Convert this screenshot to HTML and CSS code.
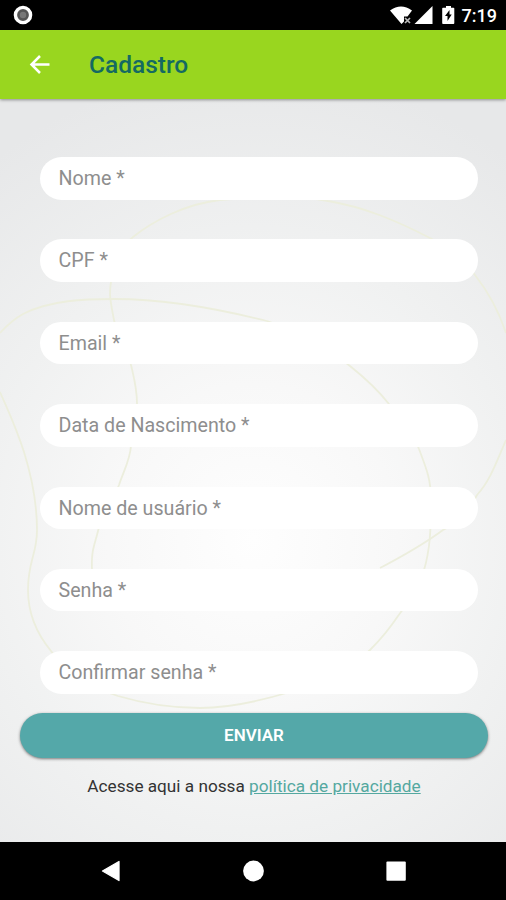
FILE: index.html
```html
<!DOCTYPE html>
<html lang="pt-BR">
<head>
<meta charset="utf-8">
<title>Cadastro</title>
<link rel="stylesheet" href="styles.css">
</head>
<body>
<div class="status-bar">
  <svg class="status-dot" width="20" height="20" viewBox="0 0 20 20"><circle cx="10" cy="10" r="7.6" fill="#555" stroke="#fff" stroke-width="3.4"/><circle cx="10" cy="10" r="3.2" fill="#777"/></svg>
  <div class="status-right">
    <svg width="66" height="20" viewBox="0 0 66 20">
      <path d="M1 5.500Q12 -2.500 23 5.500L18.500 11.500H15V16.500L12.500 19Z" fill="#fff"/>
      <path d="M16 13l5 5M21 13l-5 5" stroke="#bbb" stroke-width="1.700"/>
      <path d="M43.500 1V19H25.500Z" fill="#fff"/>
      <path d="M54 2.800h3V1h5v1.800h2.500q.8 0 .8.8V18q0 1-.8 1H54q-.8 0-.8-1V3.600q0-.8.800-.8Z" fill="#fff"/>
      <path d="M60.500 5l-4.500 6h2.500v5l4.200-6.500h-2.200Z" fill="#000"/>
    </svg>
    <span class="clock">7:19</span>
  </div>
</div>
<header class="app-bar">
  <svg class="back" width="22" height="20" viewBox="0 0 22 20"><path d="M20.500 9.500H2.500M11 1L2.500 9.500L11 18" fill="none" stroke="#fff" stroke-width="2.500"/></svg>
  <h1 class="title">Cadastro</h1>
</header>
<main class="content">
  <svg class="backdrop" width="506" height="743" viewBox="0 99 506 743" fill="none" stroke="#eceedd" stroke-width="1.800">
    <path d="M0 333Q12 320 23 314C50 300 85 299 115 299C165 299 215 308 267 321C305 333 330 350 350 366C365 378 378 390 389 404C405 422 414 434 419 449C427 470 431 480 431 500C431 530 430 550 424 570C418 588 410 601 398 616Q386 634 370 650C350 670 325 682 290 692C260 701 230 708 200 708C170 708 145 704 118 696C90 687 67 673 51 651C37 634 28 615 28 590C28 560 37 555 37 530C37 503 33 481 24 452C16 427 10 415 0 392"/>
    <path d="M92 569C91 550 95 544 98 531C103 512 113 500 119 485C124 470 130 460 131 446C135 432 138 420 137 404C137 388 134 378 131 365C125 346 117 337 114 320C110 300 109 293 111 282C113 264 120 248 133 237C153 221 185 204 220 200C260 196 302 196 328 201C364 207 395 220 430 238C451 249 465 261 475 275C490 294 499 312 506 333"/>
    <path d="M506 440C496 463 490 481 477 495C469 511 460 522 443 530C424 544 403 556 380 568"/>
  </svg>
  <form class="form">
    <label class="field">Nome *</label>
    <label class="field">CPF *</label>
    <label class="field">Email *</label>
    <label class="field">Data de Nascimento *</label>
    <label class="field">Nome de usuário *</label>
    <label class="field">Senha *</label>
    <label class="field">Confirmar senha *</label>
  </form>
  <button class="submit" type="button">ENVIAR</button>
  <p class="privacy">Acesse aqui a nossa <a class="link" href="#">política de privacidade</a></p>
</main>
<nav class="nav-bar">
  <svg width="20" height="22" viewBox="0 0 20 22"><path d="M2.500 11L19 1.500V20.500Z" fill="#fff" stroke="#fff" stroke-width="1.300" stroke-linejoin="round"/></svg>
  <svg width="22" height="22" viewBox="0 0 22 22"><circle cx="11.500" cy="11" r="10.400" fill="#fff"/></svg>
  <svg width="20" height="20" viewBox="0 0 20 20"><rect x=".4" y=".4" width="19.400" height="19.400" rx="1" fill="#fff"/></svg>
</nav>
</body>
</html>
```
FILE: styles.css
```css
* { box-sizing: border-box; }

body {
  margin: 0;
  width: 506px;
  height: 900px;
  overflow: hidden;
  display: flex;
  flex-direction: column;
  font-family: Roboto, "Liberation Sans", sans-serif;
  background: #000;
}

.status-bar {
  height: 30px;
  flex: none;
  display: flex;
  justify-content: space-between;
  align-items: center;
  padding: 0 9px 0 13px;
  background: #000;
}

.status-right {
  display: flex;
  align-items: center;
  gap: 7px;
}

.clock {
  color: #fff;
  font-size: 18px;
  font-weight: 500;
  line-height: 20px;
  padding-top: 2px;
}

.app-bar {
  height: 69px;
  flex: none;
  display: flex;
  align-items: center;
  gap: 38px;
  padding-left: 29px;
  background: #99d61f;
  box-shadow: 0 1px 3px rgba(0, 0, 0, 0.4);
  z-index: 1;
}

.title {
  margin: 0;
  color: #146a62;
  font-size: 24.500px;
  font-weight: 500;
  line-height: 30px;
}

.content {
  position: relative;
  height: 743px;
  flex: none;
  padding-top: 58px;
  background: radial-gradient(ellipse 440px 470px at 253px 440px, #fefefe 0%, #f8f8f8 33%, #f0f1f1 62%, #e7e8e9 100%);
}

.backdrop {
  position: absolute;
  inset: 0;
}

.form {
  position: relative;
  display: flex;
  flex-direction: column;
  gap: 39.900px;
  padding: 0 28px 0 40px;
}

.field {
  height: 42.500px;
  border-radius: 22px;
  padding-left: 18.500px;
  background: #fff;
  color: #8e8e8e;
  font-size: 19.650px;
  line-height: 43px;
}

.submit {
  position: relative;
  display: block;
  width: 468px;
  height: 45px;
  margin: 19.100px 0 0 20px;
  padding: 0;
  border: 0;
  border-radius: 23px;
  background: #54a8a9;
  box-shadow: 0 1px 3px rgba(0, 0, 0, 0.5);
  color: #fff;
  font-family: inherit;
  font-size: 17px;
  font-weight: 600;
  line-height: 43px;
}

.privacy {
  position: relative;
  margin: 17px 0 0;
  padding-left: 2px;
  text-align: center;
  color: #333;
  font-size: 17.200px;
  line-height: 22px;
}

.link {
  color: #54a8a0;
  text-decoration: underline;
}

.nav-bar {
  flex: 1;
  display: flex;
  align-items: center;
  justify-content: center;
  gap: 122px;
  background: #000;
}
```
